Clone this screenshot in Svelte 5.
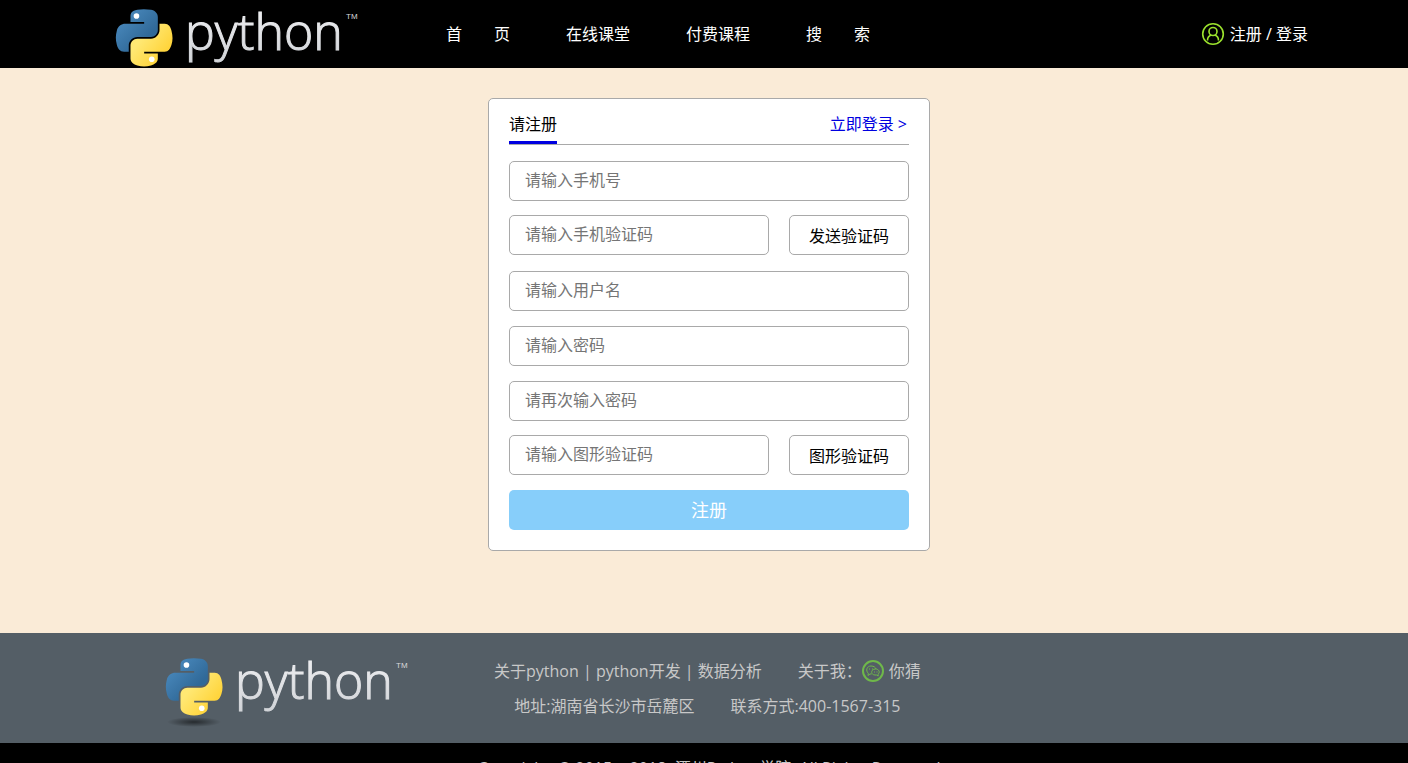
<script>
  const navLinks = ['首\u3000\u3000页', '在线课堂', '付费课程', '搜\u3000\u3000索'];
  const aboutLinks = ['关于python', 'python开发', '数据分析'];

  let form = $state({
    mobile: '',
    smsCode: '',
    username: '',
    password: '',
    passwordRepeat: '',
    captcha: '',
  });

  const fields = [
    { name: 'mobile', type: 'tel', placeholder: '请输入手机号' },
    { name: 'smsCode', type: 'text', placeholder: '请输入手机验证码', button: '发送验证码' },
    { name: 'username', type: 'text', placeholder: '请输入用户名' },
    { name: 'password', type: 'password', placeholder: '请输入密码' },
    { name: 'passwordRepeat', type: 'password', placeholder: '请再次输入密码' },
    { name: 'captcha', type: 'text', placeholder: '请输入图形验证码', button: '图形验证码' },
  ];

  const handleSubmit = (event) => {
    event.preventDefault();
  };
</script>

{#snippet logo(id, shadow)}
  <svg class="logo" width="246" height="76" viewBox="0 0 246 76" role="img" aria-label="python">
    <defs>
      <linearGradient id="{id}-blue" x1="0" y1="0" x2="1" y2="1">
        <stop offset="0" stop-color="#5091c6" />
        <stop offset="0.7" stop-color="#306998" />
      </linearGradient>
      <linearGradient id="{id}-yellow" x1="0.8" y1="0.7" x2="0.3" y2="0.3">
        <stop offset="0" stop-color="#ffd43b" />
        <stop offset="1" stop-color="#ffe873" />
      </linearGradient>
      <linearGradient id="{id}-word" x1="0" y1="0" x2="0" y2="1">
        <stop offset="0" stop-color="#f4f4f6" />
        <stop offset="1" stop-color="#d0d3d7" />
      </linearGradient>
      <radialGradient id="{id}-shadow">
        <stop offset="0" stop-color="#000" stop-opacity="0.55" />
        <stop offset="1" stop-color="#000" stop-opacity="0" />
      </radialGradient>
    </defs>
    {#if shadow}
      <ellipse cx="28" cy="66" rx="27" ry="5" fill="url(#{id}-shadow)" />
    {/if}
    <g transform="translate(-3 -1) scale(0.51)">
      <path
        fill="url(#{id}-blue)"
        d="M60.5 6.4C55.9 6.4 51.5 6.8 47.7 7.5 36.4 9.5 34.3 13.7 34.3 21.4v10.2h26.8v3.4H24.2C16.4 35 9.6 39.7 7.5 48.6c-2.5 10.2-2.6 16.6 0 27.3 1.9 7.9 6.4 13.6 14.2 13.6h9.2V77.2c0-8.8 7.7-16.6 16.8-16.6h26.8c7.4 0 13.4-6.2 13.4-13.6V21.4c0-7.2-6.1-12.7-13.4-13.9-4.6-.8-9.4-1.1-14-1.1z"
      />
      <path
        fill="url(#{id}-yellow)"
        d="M91.2 35v12c0 9.2-7.8 17-16.7 17H47.7c-7.3 0-13.4 6.2-13.4 13.6v25.5c0 7.3 6.3 11.5 13.4 13.6 8.5 2.5 16.6 3 26.8 0 6.7-1.9 13.4-5.9 13.4-13.6V92.9H61.1v-3.4h40.2c7.8 0 10.7-5.4 13.4-13.6 2.8-8.4 2.7-16.5 0-27.3C112.8 40.9 109.1 35 101.3 35z"
      />
      <circle cx="46" cy="19.7" r="5.5" fill="#fff" />
      <circle cx="76" cy="104.5" r="5.5" fill="#fff" />
    </g>
    <text class="logo__word" x="69" y="43" fill="url(#{id}-word)" stroke="url(#{id}-word)">python</text>
    <text class="logo__mark" x="230" y="12">TM</text>
  </svg>
{/snippet}

<header class="header">
  <div class="header__inner">
    <a class="header__logo" href="#home">{@render logo('top', false)}</a>
    <nav class="nav">
      {#each navLinks as link}
        <a class="nav__link" href="#nav">{link}</a>
      {/each}
    </nav>
    <div class="user">
      <svg class="user__icon" width="24" height="24" viewBox="0 0 24 24" aria-hidden="true">
        <circle cx="12" cy="12" r="10.3" />
        <circle cx="12" cy="9.5" r="4" />
        <path d="M6.5 18.5c0-3 1.5-4.8 3.7-5.5M17.5 18.5c0-3-1.5-4.8-3.7-5.5" />
      </svg>
      <span><a href="#register">注册</a> / <a href="#login">登录</a></span>
    </div>
  </div>
</header>

<main>
  <form class="card" onsubmit={handleSubmit}>
    <div class="card__head">
      <h1 class="card__title">请注册</h1>
      <a class="card__login" href="#login">立即登录 &gt;</a>
    </div>

    {#each fields as field}
      <div class="field" class:field--code={field.button}>
        <input
          type={field.type}
          name={field.name}
          placeholder={field.placeholder}
          aria-label={field.placeholder}
          autocomplete="off"
          bind:value={form[field.name]}
        />
        {#if field.button}
          <button type="button">{field.button}</button>
        {/if}
      </div>
    {/each}

    <button class="submit" type="submit">注册</button>
  </form>
</main>

<footer>
  <div class="footer">
    <div class="footer__inner">
      <div class="footer__logo">{@render logo('bottom', true)}</div>
      <div class="info">
        <div class="info__row">
          <span>
            {#each aboutLinks as link, i}
              {#if i > 0}{' | '}{/if}<a href="#about">{link}</a>
            {/each}
          </span>
          <span class="info__contact">
            关于我：
            <svg class="info__icon" width="22" height="22" viewBox="0 0 22 22" aria-hidden="true">
              <circle cx="11" cy="11" r="10" stroke-width="2" />
              <path d="M9.5 14H8l-2 1.500.3-2.300C3.500 11 4.500 6 9 6c3 0 4.500 1.500 5 3" />
              <path d="M13.500 9c-5 0-5 6-.5 6h1.500l1.700 1-.2-1.800C18.500 12.500 17 9 13.500 9z" />
              <path d="M7.500 8.500v1M10.500 8.500v1M12.500 11.500v1M15 11.500v1" />
            </svg>
            你猜
          </span>
        </div>
        <div class="info__row">
          <span>地址:湖南省长沙市岳麓区</span>
          <span>联系方式:400-1567-315</span>
        </div>
      </div>
    </div>
  </div>
  <p class="copyright">
    Copyright &nbsp;© 2015 - &nbsp;2018 &nbsp;潭州Python学院 &nbsp;All Rights Reserved
  </p>
</footer>

<style>
  :global(body) {
    margin: 0;
    background-color: #faebd7;
    color: #000;
    font-family: 'Open Sans', 'Noto Sans CJK SC', sans-serif;
    font-size: 16px;
    line-height: 24px;
  }

  a {
    color: inherit;
    text-decoration: none;
  }

  .logo {
    display: block;
    overflow: visible;
  }

  .logo__word {
    font-family: 'Open Sans', sans-serif;
    font-size: 50px;
    font-weight: 300;
    stroke-width: 1px;
  }

  .logo__mark {
    fill: #d8d8d8;
    font-family: 'Liberation Sans', sans-serif;
    font-size: 8px;
  }

  .header {
    background-color: #000;
    color: #fff;
  }

  .header__inner {
    display: flex;
    align-items: center;
    box-sizing: border-box;
    margin: 0 auto;
    padding-left: 16px;
    max-width: 1208px;
    height: 68px;
  }

  .header__logo {
    align-self: flex-start;
    padding-top: 7px;
  }

  .nav {
    display: flex;
    margin-left: 56px;
  }

  .nav__link {
    width: 120px;
    text-align: center;
  }

  .user {
    display: flex;
    align-items: center;
    gap: 5px;
    margin-left: auto;
    white-space: nowrap;
  }

  .user__icon {
    fill: none;
    stroke: #9be22d;
    stroke-width: 1.6;
  }

  main {
    display: flex;
    justify-content: center;
    padding: 30px 0 82px 10px;
  }

  .card {
    border: 1px solid #a9a9a9;
    border-radius: 5px;
    padding: 0 20px 20px;
    width: 400px;
    background-color: #fff;
  }

  .card__head {
    display: flex;
    justify-content: space-between;
    margin-bottom: 16px;
    border-bottom: 1px solid #a9a9a9;
    height: 45px;
    line-height: 50px;
  }

  .card__title {
    box-sizing: border-box;
    margin: 0;
    border-bottom: 3px solid #0000e0;
    height: 45px;
    font-size: 16px;
    font-weight: 400;
  }

  .card__login {
    padding-right: 2px;
    color: #0000e0;
  }

  .field {
    display: flex;
    gap: 20px;
    margin-top: 15px;
  }

  .field--code {
    margin-top: 14px;
  }

  .field--code + .field {
    margin-top: 16px;
  }

  input,
  button {
    box-sizing: border-box;
    border: 1px solid #a9a9a9;
    border-radius: 5px;
    height: 40px;
    background-color: #fff;
    color: #000;
    font: inherit;
  }

  input {
    flex: 1;
    padding: 0 15px 2px;
    min-width: 0;
  }

  input::placeholder {
    color: #757575;
  }

  .field button {
    padding: 2px 0 0;
    width: 120px;
  }

  .submit {
    margin-top: 15px;
    border: 0;
    width: 100%;
    background-color: #87cefa;
    color: #fff;
    font-size: 18px;
  }

  .footer {
    background-color: #545e66;
    color: #c8c8c8;
  }

  .footer__inner {
    display: flex;
    box-sizing: border-box;
    margin: 0 auto;
    padding: 23px 0 0 62px;
    max-width: 1200px;
    height: 110px;
  }

  .info {
    display: flex;
    flex-direction: column;
    gap: 11px;
    margin: 3px 0 0 82px;
    white-space: nowrap;
  }

  .info__row {
    display: flex;
    justify-content: center;
    gap: 36px;
  }

  .info__contact {
    display: flex;
    align-items: center;
  }

  .info__icon {
    margin-right: 5px;
    fill: none;
    stroke: #6fb84a;
  }

  .copyright {
    margin: 0;
    padding: 13px 0 11px 10px;
    background-color: #000;
    color: #c8c8c8;
    text-align: center;
  }
</style>
